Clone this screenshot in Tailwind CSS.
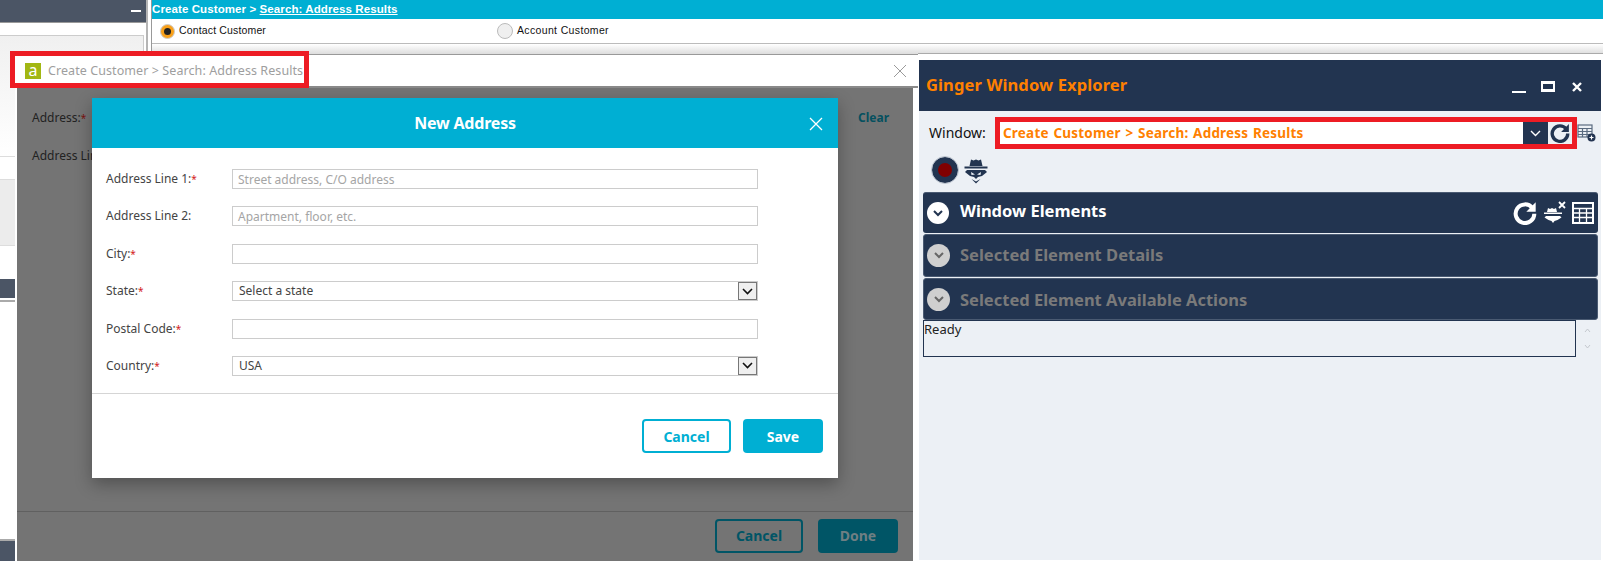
<!DOCTYPE html>
<html>
<head>
<meta charset="utf-8">
<script src="https://cdn.jsdelivr.net/npm/@tailwindcss/browser@4"></script>
</head>
<body class="bg-white">
<div class="relative w-[1603px] h-[561px] overflow-hidden bg-white font-['Noto_Sans',sans-serif]">

  <!-- background left window -->
  <div class="absolute left-0 top-0 w-[148px] h-[561px] bg-white border-r-2 border-[#b5b5b5] flex flex-col">
    <div class="h-[22px] bg-[#4b5565] flex justify-end items-center pr-[5px] shrink-0"><div class="w-[10px] h-[2px] bg-white"></div></div>
    <div class="h-[13px] shrink-0 border-t border-[#999]"></div>
    <div class="h-[121px] shrink-0 bg-gradient-to-b from-[#f0f0f0] to-white border-t border-r border-[#ccc] mr-[2px]"></div>
    <div class="h-[23px] shrink-0 border-t border-[#ddd]"></div>
    <div class="h-[67px] shrink-0 bg-[#ececec] border-y border-[#ddd]"></div>
    <div class="h-[33px] shrink-0"></div>
    <div class="h-[19px] shrink-0 bg-[#4b5565]"></div>
    <div class="h-[241px] shrink-0 border-t-2 border-b-2 border-[#aaa] mt-[2px]"></div>
    <div class="flex-1 bg-[#4b5565]"></div>
  </div>

  <!-- background top window -->
  <div class="absolute left-[151px] top-0 right-0 h-[54px] flex flex-col font-['Liberation_Sans',sans-serif] border-l border-[#999]">
    <div class="h-[19px] bg-[#00afd3] text-white font-bold text-[11.5px] leading-[19px] tracking-[0.1px] shrink-0">Create Customer &gt; <span class="underline">Search: Address Results</span></div>
    <div class="h-[25px] flex items-center text-[10.5px] tracking-[0.15px] text-[#111] border-b border-[#bbb] shrink-0">
      <div class="w-[345px] flex items-center pl-[8px] gap-[4px]">
        <div class="w-[15px] h-[15px] rounded-full bg-[#f9a11b] flex items-center justify-center border border-[#ccc]"><div class="w-[7px] h-[7px] rounded-full bg-[#222]"></div></div>
        <span>Contact Customer</span>
      </div>
      <div class="flex items-center gap-[4px]">
        <div class="w-[16px] h-[16px] rounded-full bg-[#efefef] border border-[#bbb]"></div>
        <span class="tracking-[0.35px]">Account Customer</span>
      </div>
    </div>
    <div class="flex-1 bg-gradient-to-b from-white to-[#ddd]"></div>
  </div>

  <!-- main window -->
  <div class="absolute left-[15px] top-[54px] w-[903px] h-[507px] bg-white border-t border-[#999] flex flex-col">
    <div class="h-[33px] flex items-center justify-between pl-[10px] pr-[11px] shrink-0 border-b-2 border-[#8a8a8a]">
      <div class="flex items-center gap-[7px]">
        <div class="w-[16px] h-[16px] bg-[#a2b713] text-white text-[16px] leading-[14px] text-center font-normal">a</div>
        <span class="text-[12.5px] text-[#9e9e9e] tracking-[0.08px] pt-[1px]">Create Customer &gt; Search: Address Results</span>
      </div>
      <svg class="w-[14px] h-[14px]" viewBox="0 0 14 14" fill="none" stroke="#9a9a9a" stroke-width="1"><path d="M1 1l12 12M13 1L1 13"/></svg>
    </div>
    <div class="flex-1 ml-[2px] mr-[5px] bg-[#747474] flex flex-col text-[12px] text-[#222]">
      <div class="flex-1 pl-[15px] pr-[24px] pt-[21px] relative">
        <div class="flex justify-between h-[38px]"><span>Address:<span class="text-[#7a1010] text-[10px]">*</span></span><span class="font-bold text-[#05505f]">Clear</span></div>
        <div>Address Line</div>
      </div>
      <div class="h-[50px] border-t border-[#606060] flex items-start justify-end gap-[15px] pt-[7px] pr-[15px] font-bold text-[14px]">
        <div class="w-[88px] h-[34px] border-2 border-[#005566] rounded-[4px] text-[#005566] flex items-center justify-center pb-[1px]">Cancel</div>
        <div class="w-[80px] h-[34px] bg-[#005566] rounded-[4px] text-[#6f7f83] flex items-center justify-center pb-[2px]">Done</div>
      </div>
    </div>
  </div>

  <!-- red highlight on title -->
  <div class="absolute left-[10px] top-[51px] w-[299px] h-[37px] border-[5px] border-[#ed1c24]"></div>

  <!-- dialog -->
  <div class="absolute left-[92px] top-[98px] w-[746px] h-[380px] bg-white shadow-[0_6px_16px_rgba(0,0,0,0.3)] flex flex-col text-[12px] text-[#444]">
    <div class="h-[50px] bg-[#00afd3] relative flex items-center justify-center shrink-0">
      <span class="text-white font-bold text-[16px] tracking-[-0.2px]">New Address</span>
      <svg class="absolute right-[15px] top-[19px] w-[14px] h-[14px]" viewBox="0 0 14 14" fill="none" stroke="#fff" stroke-width="1.3"><path d="M1 1l12 12M13 1L1 13"/></svg>
    </div>
    <div class="h-[246px] shrink-0 pl-[14px] pt-[21px] border-b border-[#d5d5d5]">
      <div class="grid grid-cols-[126px_526px] auto-rows-[20px] gap-y-[17.4px] items-center">
        <span>Address Line 1:<span class="text-[#d32020] text-[10px]">*</span></span>
        <div class="h-[20px] border border-[#ccc] pl-[5px] text-[#a5a5a5] leading-[20px]">Street address, C/O address</div>
        <span>Address Line 2:</span>
        <div class="h-[20px] border border-[#ccc] pl-[5px] text-[#a5a5a5] leading-[20px]">Apartment, floor, etc.</div>
        <span>City:<span class="text-[#d32020] text-[10px]">*</span></span>
        <div class="h-[20px] border border-[#ccc]"></div>
        <span>State:<span class="text-[#d32020] text-[10px]">*</span></span>
        <div class="h-[20px] border border-[#ccc] pl-[6px] flex items-center justify-between text-[#444]">Select a state
          <div class="w-[19px] h-[18px] bg-[#efefef] border border-[#777] flex items-center justify-center"><svg class="w-[11px] h-[7px]" viewBox="0 0 11 7" fill="none" stroke="#111" stroke-width="1.6"><path d="M1 1l4.5 4.5L10 1"/></svg></div>
        </div>
        <span>Postal Code:<span class="text-[#d32020] text-[10px]">*</span></span>
        <div class="h-[20px] border border-[#ccc]"></div>
        <span>Country:<span class="text-[#d32020] text-[10px]">*</span></span>
        <div class="h-[20px] border border-[#ccc] pl-[6px] flex items-center justify-between text-[#444]">USA
          <div class="w-[19px] h-[18px] bg-[#efefef] border border-[#777] flex items-center justify-center"><svg class="w-[11px] h-[7px]" viewBox="0 0 11 7" fill="none" stroke="#111" stroke-width="1.6"><path d="M1 1l4.5 4.5L10 1"/></svg></div>
        </div>
      </div>
    </div>
    <div class="flex-1 flex justify-end items-start gap-[12px] pt-[25px] pr-[15px] font-bold text-[14px]">
      <div class="w-[89px] h-[34px] border-2 border-[#00afd3] rounded-[4px] text-[#00afd3] flex items-center justify-center">Cancel</div>
      <div class="w-[80px] h-[34px] bg-[#00afd3] rounded-[4px] text-white flex items-center justify-center">Save</div>
    </div>
  </div>

  <!-- Ginger Window Explorer -->
  <div class="absolute left-[918px] top-[53px] w-[685px] h-[508px] border-t border-[#aaa] bg-white">
    <div class="mt-[6px] ml-[1px] mr-[2px] h-[51px] bg-[#223450] flex items-center justify-between pl-[7px] pr-[19px]">
      <span class="text-[#ff8000] font-bold text-[16.5px] tracking-[0.12px]">Ginger Window Explorer</span>
      <div class="flex items-center gap-[15px] mt-[2px]">
        <div class="w-[14px] h-[2px] bg-white mt-[10px]"></div>
        <div class="w-[14px] h-[11px] border-[3px] border-white border-x-2 mr-[2px]"></div>
        <svg class="w-[10px] h-[10px]" viewBox="0 0 10 10" fill="none" stroke="#fff" stroke-width="2.4"><path d="M1 1l8 8M9 1L1 9"/></svg>
      </div>
    </div>
    <div class="h-[449px] bg-[#ecf0f5] ml-[1px] mr-[2px] text-[#111]">
      <div class="flex items-start h-[38px] pl-[10px] pt-[6px]">
        <span class="w-[66px] text-[14px] leading-[32px]">Window:</span>
        <div class="w-[582px] h-[32px] border-[5px] border-[#ed1c24] bg-white flex items-stretch justify-between">
          <span class="text-[#ff8000] font-bold text-[13.5px] leading-[22px] pl-[3px] tracking-[0.2px] [word-spacing:1px]">Create Customer &gt; Search: Address Results</span>
          <div class="flex items-stretch">
            <div class="w-[24px] bg-[#223450] flex items-center justify-center"><svg class="w-[11px] h-[7px]" viewBox="0 0 11 7" fill="none" stroke="#fff" stroke-width="1.4"><path d="M1 1l4.5 4.5L10 1"/></svg></div>
            <div class="w-[25px] bg-[#ecf0f5] border-l border-[#223450] flex items-center justify-center"><svg class="w-[20px] h-[20px]" viewBox="0 0 18 18" fill="none" stroke="#223450" stroke-width="3"><path d="M14.5 5.2A7 7 0 1 0 16 9.5"/><path d="M17 1v7h-7z" fill="#223450" stroke="none"/></svg></div>
          </div>
        </div>
        <svg class="w-[19px] h-[20px] mt-[6px]" viewBox="0 0 19 20" fill="none" stroke="#5a6b80" stroke-width="1.2"><rect x="1" y="2" width="14" height="12" fill="#ecf0f5"/><path d="M1 5.500h14M1 8.500h14M1 11.500h14M5.500 5v9M10 5v9"/><circle cx="14.500" cy="14.500" r="4" fill="#223450" stroke="none"/><path d="M12.500 14.500h4M14.500 12.500v4" stroke="#fff"/></svg>
      </div>
      <div class="flex items-center h-[43px] pl-[13px] gap-[5px] pb-[1px]">
        <div class="w-[26px] h-[26px] rounded-full bg-[#800000] border-[6px] border-[#223450] outline outline-1 outline-[#b9c1cc]"></div>
        <svg class="w-[26px] h-[27px]" viewBox="0 0 26 27" fill="#223450"><path d="M8 2.500l2.500 1L13 2.500l2.500 1 2.500-1 1.500 6.500H6.500z"/><path d="M1.500 9.500h23v2h-23z"/><path d="M4 13h18l2 2-5 4-4 1-2 2-2-2-4-1-5-4z"/><path d="M8.500 22l4.500 4.500 4.500-4.500-4.500 2.500z"/><path d="M8 15l4 2.500-3.500 .5zM18 15l-4 2.500 3.500 .5z" fill="#ecf0f5"/></svg>
      </div>

      <div class="flex flex-col gap-[1px] ml-[4px] mr-[3px]">
        <div class="h-[41px] bg-[#223450] rounded-[3px] border-t border-[#4a5a72] flex items-center pl-[4px] pr-[5px]">
          <div class="w-[22px] h-[22px] rounded-full bg-white flex items-center justify-center"><svg class="w-[10px] h-[7px]" viewBox="0 0 10 7" fill="none" stroke="#223450" stroke-width="2"><path d="M1 1l4 4 4-4"/></svg></div>
          <span class="ml-[11px] pb-[3px] text-white font-bold text-[16.5px]">Window Elements</span>
          <div class="flex items-center gap-[5px] ml-auto mr-[-1px]">
            <svg class="w-[24px] h-[24px]" viewBox="0 0 18 18" fill="none" stroke="#fff" stroke-width="3"><path d="M14.500 5.200A7 7 0 1 0 16 9.500"/><path d="M17 1v7h-7z" fill="#fff" stroke="none"/></svg>
            <svg class="w-[25px] h-[24px]" viewBox="0 0 25 24" fill="#fff"><path d="M6 7l2 1 2-1 2 1 2-1 1 4H5z"/><path d="M2 11.500h18v1.500H2z"/><path d="M4 15h14l1.500 1.500-4 2.500-3 1-1.500 2-1.500-2-3-1-4-2.500z"/><path d="M17 1l6 6M23 1l-6 6" stroke="#fff" stroke-width="1.800"/></svg>
            <svg class="w-[22px] h-[22px]" viewBox="0 0 22 22" fill="#223450" stroke="#fff" stroke-width="1.300"><rect x="1" y="1" width="20" height="20" stroke-width="2"/><path d="M1 6.500h20M1 11h20M1 15.500h20M7.500 6v15M14.500 6v15"/></svg>
          </div>
        </div>
        <div class="h-[43px] bg-[#223450] rounded-[3px] border border-[#4a5a72] flex items-center pl-[3px]">
          <div class="w-[23px] h-[23px] rounded-full bg-[#cfcfcf] flex items-center justify-center"><svg class="w-[10px] h-[7px]" viewBox="0 0 10 7" fill="none" stroke="#666" stroke-width="2"><path d="M1 1l4 4 4-4"/></svg></div>
          <span class="ml-[10px] text-[#7a7a7a] font-bold text-[16.5px]">Selected Element Details</span>
        </div>
        <div class="h-[42px] bg-[#223450] rounded-[3px] border border-[#4a5a72] flex items-center pl-[3px]">
          <div class="w-[23px] h-[23px] rounded-full bg-[#cfcfcf] flex items-center justify-center"><svg class="w-[10px] h-[7px]" viewBox="0 0 10 7" fill="none" stroke="#666" stroke-width="2"><path d="M1 1l4 4 4-4"/></svg></div>
          <span class="ml-[10px] pt-[2px] text-[#7a7a7a] font-bold text-[16.5px]">Selected Element Available Actions</span>
        </div>
      </div>
      <div class="flex ml-[4px]">
        <div class="w-[653px] h-[37px] border border-[#223450] text-[13px] leading-[16px] text-[#222]">Ready</div>
        <div class="w-[22px] h-[37px] flex flex-col items-center justify-around py-[2px]">
          <svg class="w-[7px] h-[5px]" viewBox="0 0 7 5" fill="none" stroke="#c4c8ce"><path d="M1 4l2.500-3L6 4"/></svg>
          <svg class="w-[7px] h-[5px]" viewBox="0 0 7 5" fill="none" stroke="#c4c8ce"><path d="M1 1l2.500 3L6 1"/></svg>
        </div>
      </div>
    </div>
  </div>
</div>
</body>
</html>
